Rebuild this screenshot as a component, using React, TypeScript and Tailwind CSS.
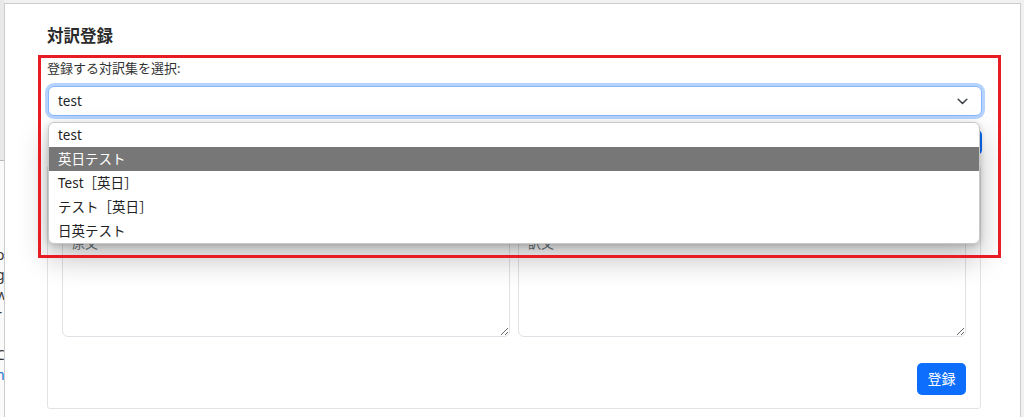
import React from "react";

const items = ["test", "英日テスト", "Test［英日］", "テスト［英日］", "日英テスト"];

export default function App() {
  return (
    <div className="relative w-[1024px] h-[417px] overflow-hidden bg-[#f1f1f1] font-['Noto_Sans','Noto_Sans_CJK_JP',sans-serif] text-[#212529]">
      <div className="flex h-full pt-[3px]">
        {/* underlying page strip on the left */}
        <div className="w-[4px] mt-[-3px] shrink-0 overflow-hidden bg-[#fafafa] flex flex-col">
          <div className="h-[161px] bg-[#e9e9e9] border-b border-[#b9b9b9] shrink-0" />
          <div className="mt-[84px] flex flex-col text-[14px] leading-[20px] ml-[-4px] text-[#333]">
            <span>o</span>
            <span>g</span>
            <span>w</span>
            <span>r</span>
            <span className="mt-[20px]">C</span>
            <span className="text-[#1a6fc9]">h</span>
          </div>
        </div>

        {/* modal window */}
        <div className="w-[1017px] h-[420px] shrink-0 bg-white border-l border-t border-r border-[#cdcdcd] pl-[42px] pr-[38px] pt-[20px]">
          <h2 className="text-[16.5px] leading-[24px] font-bold text-[#2b2b2b]">対訳登録</h2>
          <div className="mt-[10px] text-[13px] leading-[20px] text-[#333]">登録する対訳集を選択:</div>

          <div className="mt-[8px] ml-[1px] h-[30px] w-[934px] rounded-[6px] border border-[#86b7fe] shadow-[0_0_0_3px_rgba(13,110,253,0.3)] bg-white flex items-center justify-between pl-[9px] pr-[13px]">
            <span className="text-[13.5px] leading-[20px]">test</span>
            <svg width="11" height="7" viewBox="0 0 11 7" fill="none">
              <path d="M1.2 1.2 L5.5 5.5 L9.8 1.2" stroke="#3d4146" strokeWidth="1.5" strokeLinecap="round" strokeLinejoin="round" />
            </svg>
          </div>

          <div className="mt-[14px] flex justify-end">
            <div className="h-[25px] w-[60px] rounded-[5px] bg-[#0d6efd]" />
          </div>

          {/* card */}
          <div className="mt-[10px] w-[934px] border border-[#e3e3e3] rounded-[3px] px-[14px] pt-[59px] pb-[13px] flex flex-col">
            <div className="flex gap-[8px]">
              <textarea
                placeholder="原文"
                className="w-[448px] h-[112px] rounded-[6px] border border-[#dee2e6] px-[9px] py-[7px] text-[13px] leading-[20px] placeholder:text-[#6c757d] outline-none"
              />
              <textarea
                placeholder="訳文"
                className="w-[448px] h-[112px] rounded-[6px] border border-[#dee2e6] px-[9px] py-[7px] text-[13px] leading-[20px] placeholder:text-[#6c757d] outline-none"
              />
            </div>
            <div className="mt-[26px] flex justify-end">
              <button className="h-[32px] w-[49px] rounded-[5px] bg-[#0d6efd] text-white text-[14px] leading-[20px]">登録</button>
            </div>
          </div>
        </div>
      </div>

      {/* native select popup */}
      <div className="absolute left-[48px] top-[122px] w-[932px] rounded-[6px] border border-[#c9c9c9] bg-white overflow-hidden shadow-[0_14px_30px_rgba(0,0,0,0.26),0_2px_6px_rgba(0,0,0,0.18)]">
        {items.map((t, i) => (
          <div
            key={t}
            className={
              i === 1
                ? "h-[24px] pl-[9px] flex items-center text-[13.5px] bg-[#777777] text-white"
                : "h-[24px] pl-[9px] flex items-center text-[13.5px] text-[#222]"
            }
          >
            {t}
          </div>
        ))}
      </div>

      {/* annotation box */}
      <div className="pointer-events-none absolute left-[38px] top-[55px] w-[963px] h-[203px] border-[3px] border-[#e81c24]" />
    </div>
  );
}
